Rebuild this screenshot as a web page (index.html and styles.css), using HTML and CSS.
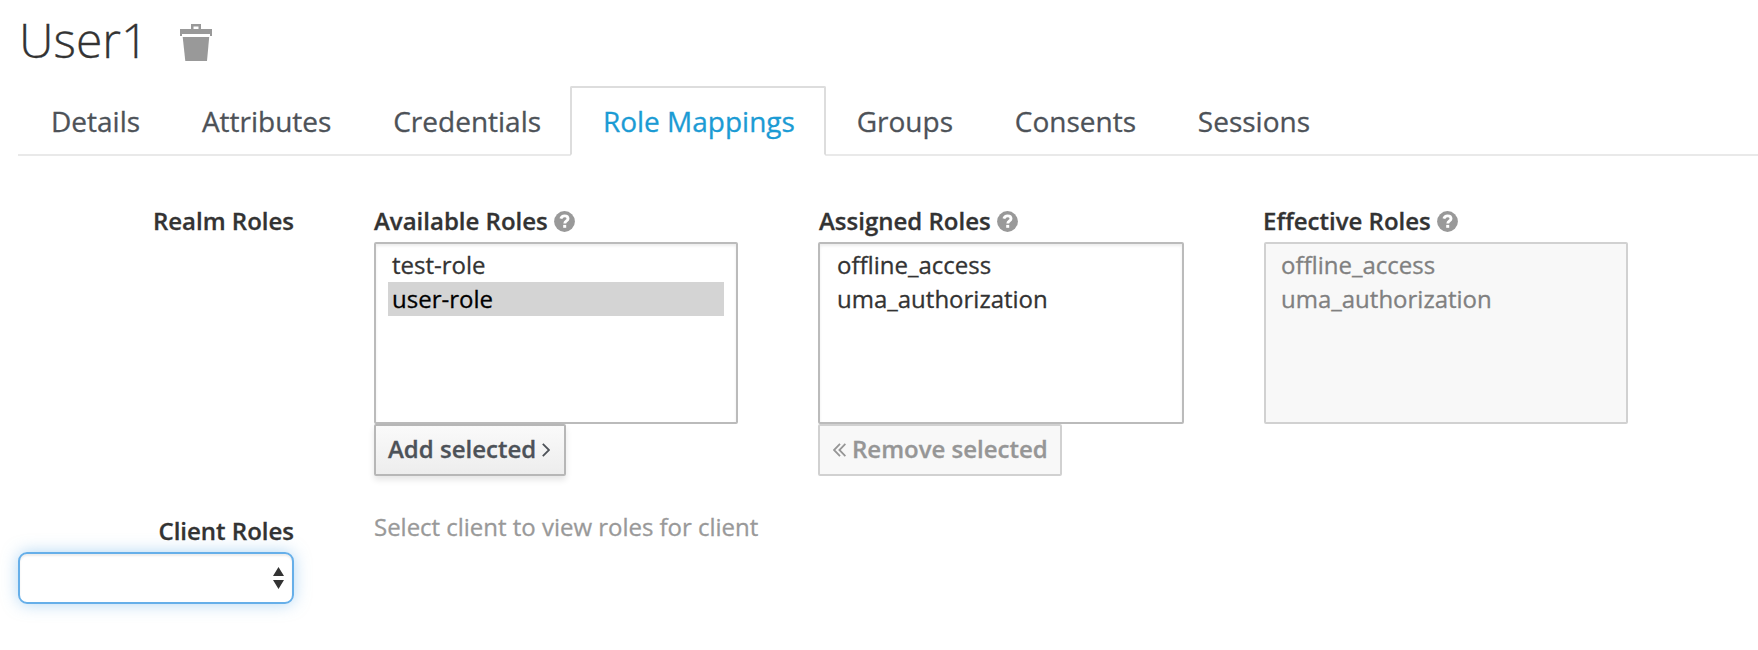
FILE: index.html
```html
<!DOCTYPE html>
<html lang="en">
<head>
<meta charset="utf-8">
<title>User1 - Role Mappings</title>
<link rel="stylesheet" href="styles.css">
</head>
<body>
<svg class="defs" width="0" height="0">
  <symbol id="help" viewBox="0 0 21 21">
    <circle cx="10.5" cy="10.5" r="10.4" fill="#999"/>
    <path d="M6.9 7.6C7.4 5.7 8.7 4.9 10.6 4.9C12.7 4.9 14 6.1 14 7.7C14 9.8 10.8 9.9 10.8 12.4" fill="none" stroke="#fff" stroke-width="2.9"/>
    <rect x="9.2" y="13.9" width="3" height="2.9" fill="#fff"/>
  </symbol>
</svg>
<header class="page-header">
  <h1 class="title">User1</h1>
  <svg class="trash" viewBox="0 0 32 37" fill="#999">
    <path fill-rule="evenodd" d="M11 0H21V5H32V12H30V10H2V12H0V5H11ZM13.5 2.5V5H18.5V2.5Z"/>
    <path d="M2.7 13H29.2L27 37H5.3Z"/>
  </svg>
</header>
<nav class="tabs">
  <a class="tab">Details</a>
  <a class="tab">Attributes</a>
  <a class="tab">Credentials</a>
  <a class="tab active">Role Mappings</a>
  <a class="tab">Groups</a>
  <a class="tab">Consents</a>
  <a class="tab">Sessions</a>
</nav>
<main class="form">
  <section class="row realm">
    <div class="row-label">Realm Roles</div>
    <div class="column">
      <div class="label">Available Roles<svg class="help"><use href="#help"/></svg></div>
      <div class="list">
        <div class="option">test-role</div>
        <div class="option selected">user-role</div>
      </div>
      <button class="button">Add selected<svg class="chevron" viewBox="0 0 8 14"><path d="M.8 .8L7 7L.8 13.2"/></svg></button>
    </div>
    <div class="column wide">
      <div class="label">Assigned Roles<svg class="help"><use href="#help"/></svg></div>
      <div class="list">
        <div class="option">offline_access</div>
        <div class="option">uma_authorization</div>
      </div>
      <button class="button disabled"><svg class="double" viewBox="0 0 13 14"><path d="M7 .8L1 7L7 13.2M12.4 .8L6.4 7L12.4 13.2"/></svg>Remove selected</button>
    </div>
    <div class="column last">
      <div class="label">Effective Roles<svg class="help"><use href="#help"/></svg></div>
      <div class="list disabled">
        <div class="option">offline_access</div>
        <div class="option">uma_authorization</div>
      </div>
    </div>
  </section>
  <section class="row client">
    <div class="client-field">
      <div class="row-label">Client Roles</div>
      <div class="select" tabindex="0">
        <svg class="arrows" viewBox="0 0 11 22"><path d="M5.5 0L11 9H0ZM0 13H11L5.5 22Z" fill="#333"/></svg>
      </div>
    </div>
    <div class="hint">Select client to view roles for client</div>
  </section>
</main>
</body>
</html>
```
FILE: styles.css
```css
* { box-sizing: border-box; }
body {
  margin: 0;
  min-height: 100vh;
  background: #fff;
  color: #333;
  font: 24px/34px "Open Sans", sans-serif;
  -webkit-text-stroke: .3px;
}
.defs { position: absolute; }
.page-header {
  display: flex;
  align-items: flex-start;
  gap: 32px;
  height: 86px;
  padding: 20px 0 0 19px;
}
.title {
  margin: 0;
  font-size: 48px;
  font-weight: 300;
  line-height: 40px;
}
.trash { width: 32px; height: 37px; margin-top: 4px; }
.tabs {
  display: flex;
  height: 70px;
  margin-left: 18px;
  background: linear-gradient(#e9e9e9, #e9e9e9) bottom / 100% 2px no-repeat;
}
.tab {
  margin-right: -2.2px;
  padding: 0 29px 0 31px;
  border: 2px solid transparent;
  color: #4d5258;
  font-size: 28px;
  line-height: 66px;
}
.tab.active {
  border-color: #ddd;
  border-bottom-color: #fff;
  border-radius: 2px 2px 0 0;
  background: #fff;
  color: #1b9bd4;
}
.form { padding: 48px 0 40px 18px; }
.row { display: flex; align-items: flex-start; }
.row-label {
  width: 276px;
  text-align: right;
  font-weight: 600;
}
.realm { gap: 80px; height: 310px; }
.column { width: 364px; }
.column.wide { width: 366px; }
.label {
  display: flex;
  height: 38px;
  font-weight: 600;
}
.column.wide .label { padding-left: 1px; }
.help { width: 21px; height: 21px; margin: 7px 0 0 6px; }
.column.last .label { margin-left: -1px; }
.list {
  height: 182px;
  padding: 4px 12px;
  border: 2px solid #bbb;
  border-radius: 2px;
  box-shadow: inset 0 2px 3px rgba(0, 0, 0, .075);
}
.option { padding-left: 4px; line-height: 34px; }
.column.wide .option { padding-left: 5px; }
.column.last .option { padding-left: 3px; }
.option.selected {
  background: #d4d4d4;
  color: #000;
}
.list.disabled {
  border-color: #d1d1d1;
  background: #f8f8f8;
  box-shadow: none;
  color: #808080;
}
.button {
  display: flex;
  align-items: center;
  height: 52px;
  padding: 0 12px 3px;
  border: 2px solid #b7b7b7;
  border-radius: 2px;
  background: linear-gradient(#fafafa, #ededed);
  box-shadow: 0 4px 6px rgba(3, 3, 3, .1);
  color: #4d5258;
  font: 600 24px/34px "Open Sans", sans-serif;
  -webkit-text-stroke: .3px;
  white-space: nowrap;
}
.button.disabled {
  border-color: #d1d1d1;
  background: #f8f8f8;
  box-shadow: none;
  color: #969696;
}
.chevron, .double {
  height: 14px;
  margin-top: 3px;
  fill: none;
  stroke: currentColor;
  stroke-width: 1.8;
}
.chevron { width: 8px; margin: 3px 2px 0 6px; }
.double { width: 13px; margin: 3px 6px 0 1px; }
.client { gap: 80px; }
.hint { margin-top: -4px; color: #999; letter-spacing: -.02px; }
.select {
  display: flex;
  justify-content: flex-end;
  align-items: center;
  width: 276px;
  height: 52px;
  margin-top: 4px;
  padding-right: 8px;
  border: 2px solid #66afe9;
  border-radius: 9px;
  box-shadow: inset 0 2px 2px rgba(0, 0, 0, .075), 0 0 16px rgba(102, 175, 233, .5);
  outline: none;
}
.arrows { width: 11px; height: 22px; }
```
